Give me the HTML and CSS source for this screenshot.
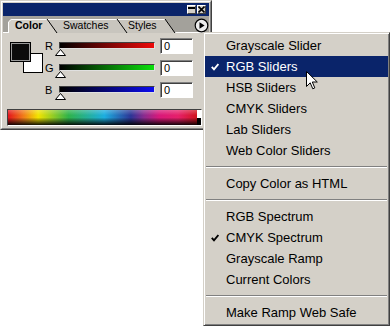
FILE: index.html
```html
<!DOCTYPE html>
<html lang="en">
<head>
  <meta charset="UTF-8" />
  <title>Color Palette</title>
  <link rel="stylesheet" href="styles.css">
</head>
<body>
<div class="palette">
  <div class="palette-inner">
    <div class="titlebar">
      <span class="tb-btn">
        <svg width="7" height="7" viewBox="0 0 7 7"><rect x="0" y="1" width="7" height="2" fill="#000"/></svg>
      </span>
      <span class="tb-btn">
        <svg width="7" height="7" viewBox="0 0 7 7"><path d="M0.5 0.5 L6.5 6.5 M6.5 0.5 L0.5 6.5" stroke="#000" stroke-width="1.6"/></svg>
      </span>
    </div>

    <div class="tabs">
      <svg class="tab-shapes" width="206" height="17" viewBox="0 0 206 17">
        <rect x="0" y="0" width="206" height="17" fill="#a3a19b"/>
        <line x1="0" y1="16.5" x2="206" y2="16.5" stroke="#fff"/>
        <polygon points="110,17 110,3 162,3 172,17" fill="#c8c5be"/>
        <polyline points="110,3.5 162,3.5" stroke="#fff" fill="none"/>
        <line x1="162" y1="3" x2="172" y2="17" stroke="#000"/>
        <polygon points="44,17 44,3 114,3 124,17" fill="#c8c5be"/>
        <polyline points="44,3.5 114,3.5" stroke="#fff" fill="none"/>
        <line x1="114" y1="3" x2="124" y2="17" stroke="#000"/>
        <polygon points="5,17 5,6 8,3 44,3 54,17" fill="#d4d0c8"/>
        <polyline points="5.5,17 5.5,6 8.2,3.5 44,3.5" stroke="#fff" fill="none"/>
        <line x1="44" y1="3" x2="54" y2="17" stroke="#000"/>
        <circle cx="198.5" cy="9.5" r="6.3" fill="#ececec" stroke="#000" stroke-width="1.2"/>
        <polygon points="196.5,6.3 196.5,12.7 201.6,9.5" fill="#000"/>
      </svg>
      <div class="tab-labels">
        <span class="tab tab-active">Color</span>
        <span class="tab tab-swatches">Swatches</span>
        <span class="tab">Styles</span>
      </div>
    </div>

    <div class="panel-body">
      <div class="controls">
        <div class="swatches">
          <div class="swatch swatch-bg"></div>
          <div class="swatch swatch-fg"></div>
        </div>
        <div class="sliders">
          <div class="slider-row">
            <span class="channel">R</span>
            <div class="slider">
              <div class="track track-r"></div>
              <svg class="thumb" width="11" height="7" viewBox="0 0 11 7"><polygon points="5.5,0.5 10.5,6.5 0.5,6.5" fill="#fff" stroke="#000"/></svg>
            </div>
            <div class="value">0</div>
          </div>
          <div class="slider-row">
            <span class="channel">G</span>
            <div class="slider">
              <div class="track track-g"></div>
              <svg class="thumb" width="11" height="7" viewBox="0 0 11 7"><polygon points="5.5,0.5 10.5,6.5 0.5,6.5" fill="#fff" stroke="#000"/></svg>
            </div>
            <div class="value">0</div>
          </div>
          <div class="slider-row">
            <span class="channel">B</span>
            <div class="slider">
              <div class="track track-b"></div>
              <svg class="thumb" width="11" height="7" viewBox="0 0 11 7"><polygon points="5.5,0.5 10.5,6.5 0.5,6.5" fill="#fff" stroke="#000"/></svg>
            </div>
            <div class="value">0</div>
          </div>
        </div>
      </div>
      <div class="spectrum">
        <div class="spectrum-ramp"></div>
        <div class="spectrum-ends"><span class="end-white"></span><span class="end-black"></span></div>
      </div>
    </div>
  </div>
</div>

<div class="menu">
  <div class="item"><span class="mark"></span>Grayscale Slider</div>
  <div class="item active"><span class="mark"><svg width="8" height="8" viewBox="0 0 8 8"><polyline points="0.8,3.8 3,6.3 7.4,1" fill="none" stroke="currentColor" stroke-width="1.9"/></svg></span>RGB Sliders</div>
  <div class="item"><span class="mark"></span>HSB Sliders</div>
  <div class="item"><span class="mark"></span>CMYK Sliders</div>
  <div class="item"><span class="mark"></span>Lab Sliders</div>
  <div class="item"><span class="mark"></span>Web Color Sliders</div>
  <div class="sep"></div>
  <div class="item"><span class="mark"></span>Copy Color as HTML</div>
  <div class="sep"></div>
  <div class="item"><span class="mark"></span>RGB Spectrum</div>
  <div class="item"><span class="mark"><svg width="8" height="8" viewBox="0 0 8 8"><polyline points="0.8,3.8 3,6.3 7.4,1" fill="none" stroke="currentColor" stroke-width="1.9"/></svg></span>CMYK Spectrum</div>
  <div class="item"><span class="mark"></span>Grayscale Ramp</div>
  <div class="item"><span class="mark"></span>Current Colors</div>
  <div class="sep"></div>
  <div class="item"><span class="mark"></span>Make Ramp Web Safe</div>
</div>

<svg class="cursor" width="12" height="19" viewBox="0 0 12 19">
  <path d="M0.5 0.5 V15.5 L4.2 11.8 L6.8 17.8 L8.8 16.9 L6.3 11 H11.3 Z" fill="#fff" stroke="#000" stroke-linejoin="miter"/>
</svg>
</body>
</html>
```

FILE: styles.css
```css
body {
  margin: 0;
  background-color: #fff;
  font-family: 'Liberation Sans', Arial, sans-serif;
  color: #000;
  position: relative;
  height: 327px;
  overflow: hidden;
}

/* palette window */
.palette {
  width: 212px;
  box-sizing: border-box;
  border: 1px solid;
  border-color: #d4d0c8 #404040 #404040 #d4d0c8;
  background-color: #d4d0c8;
}

.palette-inner {
  border: 1px solid;
  border-color: #fff #808080 #808080 #fff;
  padding: 1px;
}

.titlebar {
  height: 13px;
  background-color: #0a246a;
  display: flex;
  justify-content: flex-end;
  align-items: center;
  gap: 1px;
  padding-right: 3px;
}

.tb-btn {
  width: 9px;
  height: 9px;
  box-sizing: border-box;
  background-color: #d4d0c8;
  border: 1px solid;
  border-color: #fff #404040 #404040 #fff;
  display: flex;
  align-items: center;
  justify-content: center;
}

.tb-btn svg {
  display: block;
}

.tabs {
  display: grid;
  height: 17px;
}

.tab-shapes,
.tab-labels {
  grid-area: 1 / 1;
}

.tab-shapes {
  display: block;
}

.tab-labels {
  display: flex;
  padding: 3px 0 0 12px;
  font-size: 10.5px;
  line-height: 13px;
}

.tab {
  width: 65px;
}

.tab-active {
  width: 48px;
  font-weight: bold;
}

/* body */
.panel-body {
  padding: 5px 0 1px 4px;
}

.controls {
  display: flex;
}

.swatches {
  display: grid;
  width: 35px;
  margin-left: 3px;
}

.swatch {
  grid-area: 1 / 1;
  box-sizing: border-box;
  border: 1px solid #000;
}

.swatch-fg {
  width: 21px;
  height: 20px;
  margin-top: 4px;
  background-color: #0b0b0b;
  box-shadow: inset 0 0 0 1px #9a9a9a;
}

.swatch-bg {
  width: 20px;
  height: 20px;
  margin: 15px 0 0 13px;
  background-color: #fff;
}

.sliders {
  display: flex;
  flex-direction: column;
  gap: 6px;
}

.slider-row {
  display: flex;
  align-items: flex-start;
  height: 16px;
}

.channel {
  width: 14px;
  font-size: 11px;
  line-height: 16px;
}

.slider {
  width: 96px;
  margin-top: 4px;
  display: flex;
  flex-direction: column;
}

.track {
  height: 7px;
  box-sizing: border-box;
  border: 1px solid;
  border-color: #404040 #e0e0e0 #e0e0e0 #404040;
}

.track-r { background: linear-gradient(to right, #000, #ee0a0a); }
.track-g { background: linear-gradient(to right, #000, #0ce00c); }
.track-b { background: linear-gradient(to right, #000, #0c0cee); }

.thumb {
  display: block;
  margin: 0 0 0 -4px;
}

.value {
  margin-left: 5px;
  width: 33px;
  height: 16px;
  box-sizing: border-box;
  background-color: #fff;
  border: 1px solid;
  border-color: #808080 #fff #fff #808080;
  box-shadow: inset 1px 1px 0 #404040;
  font-size: 11px;
  line-height: 14px;
  padding-left: 3px;
}

.spectrum {
  margin-top: 11px;
  width: 195px;
  height: 17px;
  box-sizing: border-box;
  border: 1px solid;
  border-color: #404040 #fff #fff #404040;
  display: flex;
}

.spectrum-ramp {
  flex: 1;
  background:
    linear-gradient(to bottom, rgba(255,255,255,0.25), rgba(255,255,255,0) 35%, rgba(0,0,0,0) 50%, rgba(0,0,0,0.92)),
    linear-gradient(to right, #e3141c, #f07a1a 8%, #f2e400 16%, #2fb34a 32%, #1caee0 51%, #2c3596 65%, #8a2b8e 72%, #d9187a 80%, #e6206a 90%, #d0141c);
}

.spectrum-ends {
  width: 4px;
  display: flex;
  flex-direction: column;
}

.end-white { flex: 1; background-color: #fff; }
.end-black { flex: 1; background-color: #000; }

/* fly-out menu */
.menu {
  position: absolute;
  left: 203px;
  top: 32px;
  width: 187px;
  box-sizing: border-box;
  background-color: #d4d0c8;
  border: 1px solid;
  border-color: #d4d0c8 #404040 #404040 #d4d0c8;
  box-shadow: inset 1px 1px 0 #fff, inset -1px -1px 0 #808080;
  padding: 2px 1px;
  font-size: 13px;
}

.item {
  display: flex;
  align-items: center;
  height: 21px;
  white-space: nowrap;
}

.item.active {
  background-color: #0a246a;
  color: #fff;
}

.mark {
  width: 21px;
  box-sizing: border-box;
  padding-left: 6px;
  display: flex;
  align-items: center;
}

.mark svg {
  display: block;
}

.sep {
  height: 12px;
  margin: 0 1px;
  display: flex;
  flex-direction: column;
  justify-content: center;
}

.sep::before {
  content: "";
  height: 0;
  border-top: 1px solid #808080;
  border-bottom: 1px solid #fff;
}

.cursor {
  position: absolute;
  left: 306px;
  top: 71px;
}
```
